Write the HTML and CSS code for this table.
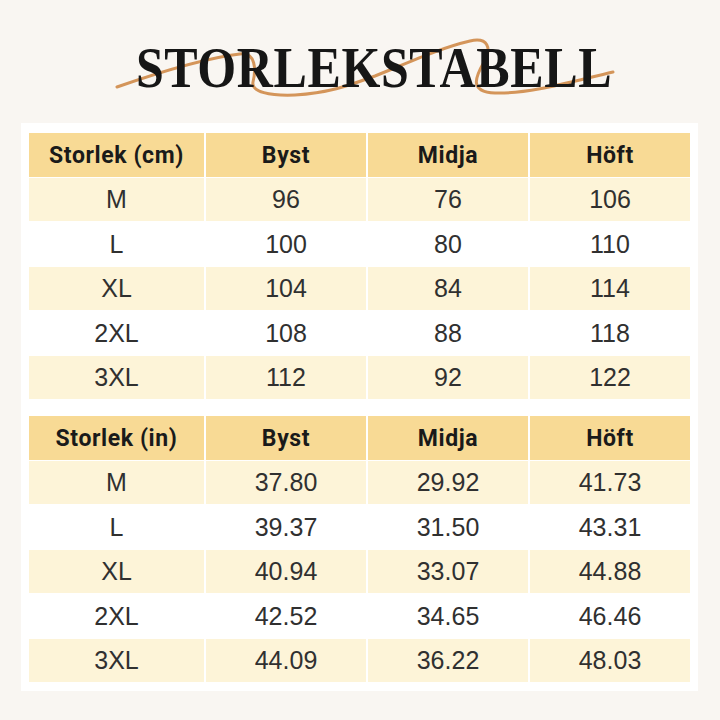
FILE: index.html
```html
<!DOCTYPE html>
<html lang="sv">
<head>
<meta charset="utf-8">
<title>Storlekstabell</title>
<link rel="stylesheet" href="styles.css">
</head>
<body>
<div class="page">
  <header class="head">
    <svg class="swoosh" width="720" height="123" viewBox="0 0 720 123" aria-hidden="true">
      <path d="M117,87 C160,72 205,58 240,54 C256,52 256,70 253,82 C251,92 270,96 295,95 C330,93 350,85 375,76 C410,62 440,48 470,41 C488,37 492,48 484,62 C476,76 468,92 495,93 C530,94 570,82 613,72" fill="none" stroke="#d4955a" stroke-width="3" stroke-linecap="round"/>
    </svg>
    <h1 class="title">STORLEKSTABELL</h1>
  </header>
  <main class="card">
    <div class="table">
      <div class="cell th">Storlek (cm)</div><div class="cell th">Byst</div><div class="cell th">Midja</div><div class="cell th">Höft</div>
      <div class="cell odd">M</div><div class="cell odd">96</div><div class="cell odd">76</div><div class="cell odd">106</div>
      <div class="cell">L</div><div class="cell">100</div><div class="cell">80</div><div class="cell">110</div>
      <div class="cell odd">XL</div><div class="cell odd">104</div><div class="cell odd">84</div><div class="cell odd">114</div>
      <div class="cell">2XL</div><div class="cell">108</div><div class="cell">88</div><div class="cell">118</div>
      <div class="cell odd">3XL</div><div class="cell odd">112</div><div class="cell odd">92</div><div class="cell odd">122</div>
    </div>
    <div class="table">
      <div class="cell th">Storlek (in)</div><div class="cell th">Byst</div><div class="cell th">Midja</div><div class="cell th">Höft</div>
      <div class="cell odd">M</div><div class="cell odd">37.80</div><div class="cell odd">29.92</div><div class="cell odd">41.73</div>
      <div class="cell">L</div><div class="cell">39.37</div><div class="cell">31.50</div><div class="cell">43.31</div>
      <div class="cell odd">XL</div><div class="cell odd">40.94</div><div class="cell odd">33.07</div><div class="cell odd">44.88</div>
      <div class="cell">2XL</div><div class="cell">42.52</div><div class="cell">34.65</div><div class="cell">46.46</div>
      <div class="cell odd">3XL</div><div class="cell odd">44.09</div><div class="cell odd">36.22</div><div class="cell odd">48.03</div>
    </div>
  </main>
</div>
</body>
</html>
```
FILE: styles.css
```css
html, body {
  margin: 0;
  padding: 0;
}
body {
  background: #f9f6f2;
  width: 720px;
  height: 720px;
  overflow: hidden;
}
.page {
  width: 720px;
  height: 720px;
  display: flex;
  flex-direction: column;
}
.head {
  position: relative;
  height: 123px;
  flex: none;
}
.swoosh {
  position: absolute;
  left: 0;
  top: 0;
}
.title {
  position: relative;
  margin: 42px 0 0;
  padding-left: 28px;
  text-align: center;
  font-family: "Liberation Serif", "Times New Roman", serif;
  font-weight: 700;
  font-size: 50px;
  line-height: 56px;
  letter-spacing: 0.6px;
  color: #161616;
  transform: scaleY(1.12);
  transform-origin: 50% 47px;
}
.card {
  margin: 0 22px 0 21px;
  background: #ffffff;
  padding: 10px 8px 9px;
  display: flex;
  flex-direction: column;
  gap: 17px;
}
.table {
  display: grid;
  grid-template-columns: 175px 160px 160px 160px;
  grid-auto-rows: 43.5px;
  column-gap: 2px;
  row-gap: 1px;
}
.cell {
  display: flex;
  align-items: center;
  justify-content: center;
  padding-top: 1px;
  background: #ffffff;
  font-family: "Liberation Sans", Arial, sans-serif;
  font-size: 25px;
  color: #303030;
}
.cell.odd {
  background: #fdf4d8;
}
.cell.th {
  background: #f8da95;
  font-family: Roboto, "Liberation Sans", sans-serif;
  font-weight: 700;
  font-size: 23px;
  letter-spacing: 0.6px;
  color: #1a1a1a;
}
```
